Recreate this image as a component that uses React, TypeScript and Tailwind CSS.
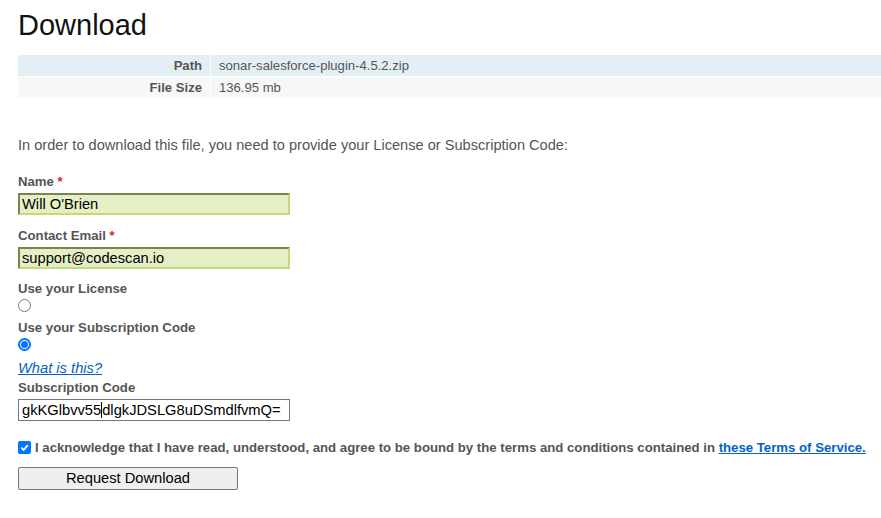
import React from 'react';

const FileInfoRow = ({ label, value, shaded }: { label: string; value: string; shaded: string }) => (
  <div className={`flex h-[21px] items-center ${shaded}`}>
    <div className="w-[192px] pr-[8px] text-right font-bold text-[#555]">{label}</div>
    <div className="h-full w-[1px] bg-white" />
    <div className="pl-[8px] text-[#555]">{value}</div>
  </div>
);

const Label = ({ children, required }: { children: React.ReactNode; required?: boolean }) => (
  <div className="text-[13.2px] font-bold leading-[16px] text-[#555]">
    {children}
    {required && <span className="text-[#e02020]"> *</span>}
  </div>
);

const FilledInput = ({ value }: { value: string }) => (
  <div className="mt-[3px] h-[22px] w-[272px] border-2 border-b-[#c5d97c] border-l-[#7a8450] border-r-[#c5d97c] border-t-[#7a8450] bg-[#e5efc5] pl-[2px] text-[14.7px] leading-[18px] text-black">
    {value}
  </div>
);

const Radio = ({ checked }: { checked?: boolean }) =>
  checked ? (
    <div className="mt-[2px] flex h-[13px] w-[13px] items-center justify-center rounded-full border-2 border-[#0075ff]">
      <div className="h-[7px] w-[7px] rounded-full bg-[#0075ff]" />
    </div>
  ) : (
    <div className="mt-[2px] h-[13px] w-[13px] rounded-full border border-[#767676]" />
  );

export default function App() {
  return (
    <div className="min-h-[518px] bg-white pl-[18px] font-['Liberation_Sans',Arial,sans-serif]">
      <h1 className="pt-[8px] text-[29px] leading-[34px] text-[#111]">Download</h1>

      <div className="mt-[13px] flex flex-col gap-[1px] text-[13.1px]">
        <FileInfoRow label="Path" value="sonar-salesforce-plugin-4.5.2.zip" shaded="bg-[#e4eff5]" />
        <FileInfoRow label="File Size" value="136.95 mb" shaded="bg-[#f7f7f7]" />
      </div>

      <p className="mt-[38px] text-[14.6px] leading-[18px] text-[#555]">
        In order to download this file, you need to provide your License or Subscription Code:
      </p>

      <div className="mt-[20px]">
        <Label required>Name</Label>
        <FilledInput value="Will O'Brien" />
      </div>

      <div className="mt-[13px]">
        <Label required>Contact Email</Label>
        <FilledInput value="support@codescan.io" />
      </div>

      <div className="mt-[12px]">
        <Label>Use your License</Label>
        <Radio />
      </div>

      <div className="mt-[8px]">
        <Label>Use your Subscription Code</Label>
        <Radio checked />
      </div>

      <a href="#" className="mt-[8px] block w-fit text-[14.7px] italic leading-[18px] text-[#0563c1] underline">
        What is this?
      </a>

      <div className="mt-[3px]">
        <Label>Subscription Code</Label>
        <div className="mt-[3px] flex h-[22px] w-[272px] items-center border border-[#767676] bg-white pl-[3px] text-[14.7px] text-black">
          gkKGlbvv55<span className="inline-block h-[16px] w-[1px] bg-black" />dlgkJDSLG8uDSmdlfvmQ=
        </div>
      </div>

      <div className="mt-[17px] flex items-center gap-[4px] text-[13.2px] font-bold text-[#555]">
        <div className="flex h-[13px] w-[13px] items-center justify-center rounded-[2px] bg-[#0075ff]">
          <svg viewBox="0 0 12 12" className="h-[11px] w-[11px]">
            <path d="M2.5 6.2 L5 8.6 L9.6 3.4" fill="none" stroke="white" strokeWidth="2" />
          </svg>
        </div>
        <span>
          I acknowledge that I have read, understood, and agree to be bound by the terms and conditions contained in{' '}
          <a href="#" className="text-[#0563c1] underline">
            these Terms of Service.
          </a>
        </span>
      </div>

      <button className="mt-[9px] h-[23px] w-[220px] rounded-[2px] border border-[#767676] bg-[#efefef] text-[14.7px] leading-[18px] text-black">
        Request Download
      </button>
    </div>
  );
}
